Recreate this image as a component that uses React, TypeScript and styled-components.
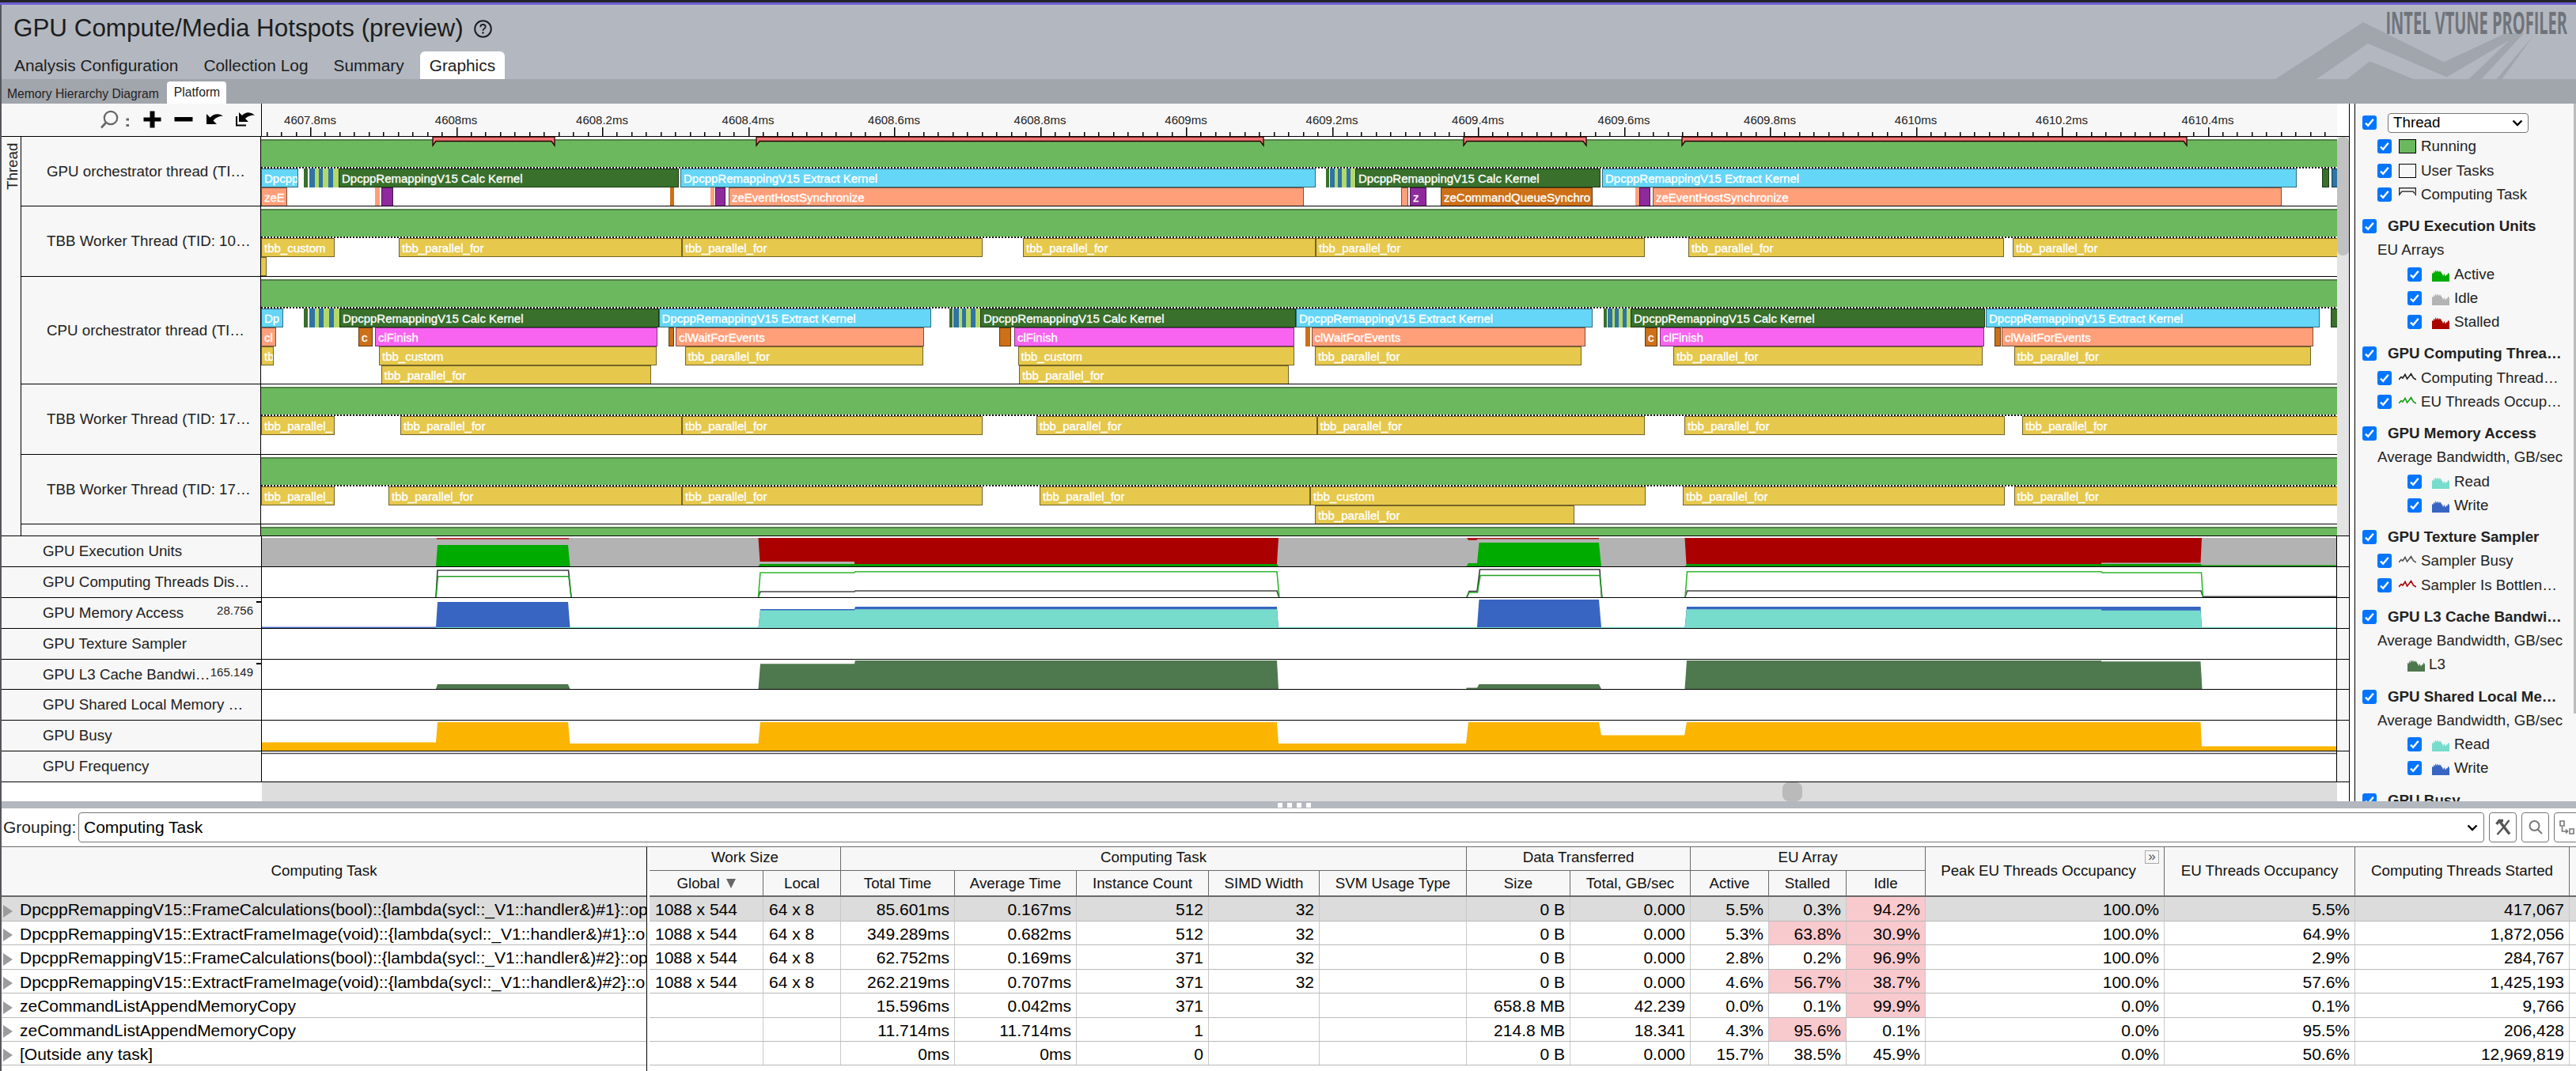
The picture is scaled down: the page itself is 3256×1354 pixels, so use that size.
import React from "react";
import styled, { createGlobalStyle } from "styled-components";

const Global = createGlobalStyle`
  * { box-sizing: border-box; }
  body { margin: 0; background: #fff; overflow: hidden; }
`;

/* ---------- page frame ---------- */

const Page = styled.div`
  width: 3256px;
  height: 1354px;
  display: flex;
  flex-direction: column;
  overflow: hidden;
  background: #fff;
  color: #222;
  font-family: "Liberation Sans", Arial, sans-serif;
  font-size: 18.75px;
  white-space: nowrap;
`;

const TopStrip = styled.div`
  height: 6px;
  flex: none;
  background: #222229;
  border-bottom: 3px solid #6c5fd3;
`;

const Body = styled.div`
  flex: 1;
  min-height: 0;
  display: flex;
  flex-direction: column;
  border-left: 2px solid #55575c;
`;

const Header = styled.header`
  height: 94px;
  flex: none;
  display: flex;
  justify-content: space-between;
  background: #b3b8c0;
`;

const HeaderMain = styled.div`
  display: flex;
  flex-direction: column;
  justify-content: space-between;
`;

const Title = styled.h1`
  margin: 12px 0 0 15px;
  display: flex;
  align-items: center;
  gap: 13px;
  font-size: 31.4px;
  line-height: 36px;
  font-weight: 400;
  color: #1c1d20;
`;

const Tabs = styled.nav`
  display: flex;
  align-items: flex-end;
  padding-left: 4px;
`;

const Tab = styled.a<{ $active?: boolean }>`
  height: 35px;
  padding: 0 12px;
  margin-right: 8px;
  font-size: 20.85px;
  line-height: 36px;
  color: #1c1d20;
  border-radius: 6px 6px 0 0;
  background: ${(p) => (p.$active ? "#fff" : "transparent")};
`;

const Brand = styled.div`
  position: relative;
  width: 400px;
  height: 94px;
`;

const BrandArt = styled.svg`
  display: block;
`;

const BrandName = styled.span`
  position: absolute;
  right: 11px;
  top: 1px;
  font-family: "Open Sans", "Liberation Sans", sans-serif;
  font-weight: 700;
  font-size: 40px;
  line-height: 42px;
  color: #70747a;
  transform: scaleX(0.5);
  transform-origin: right center;
`;

const SubTabs = styled.nav`
  height: 31px;
  flex: none;
  display: flex;
  align-items: flex-end;
  background: #a1a5ac;
`;

const SubTab = styled.a<{ $active?: boolean }>`
  height: 28px;
  padding: ${(p) => (p.$active ? "0 8px 0 9px" : "2px 10px 0 7px")};
  font-size: 15.7px;
  line-height: 28px;
  border-radius: 4px 4px 0 0;
  background: ${(p) => (p.$active ? "#fff" : "transparent")};
`;

/* ---------- timeline ---------- */

const Workspace = styled.div`
  height: 882px;
  flex: none;
  display: flex;
`;

const Timeline = styled.div`
  width: 2967px;
  flex: none;
  display: flex;
  flex-direction: column;
`;

const RulerRow = styled.div`
  height: 42px;
  flex: none;
  display: flex;
  border-bottom: 1px solid #000;
`;

const Toolbar = styled.div`
  width: 329px;
  border-right: 1px solid #000;
  background: #f7f7f7;
`;

const Ruler = styled.svg`
  display: block;
  flex: none;
  background: #f7f7f7;
`;

const ThreadArea = styled.div`
  height: 505px;
  flex: none;
  display: flex;
  position: relative;
  border-bottom: 1px solid #000;
`;

const GroupColumn = styled.div`
  width: 25px;
  display: flex;
  justify-content: center;
  border-right: 1px solid #000;
  background: #f7f7f7;
`;

const GroupName = styled.span`
  writing-mode: vertical-rl;
  transform: rotate(180deg);
  height: 66px;
  margin: 8px 0 0 3px;
  line-height: 24px;
  text-align: right;
`;

const ThreadRows = styled.div`
  width: 2927px;
  overflow: hidden;
`;

const ThreadRow = styled.div<{ $h: number }>`
  height: ${(p) => p.$h}px;
  display: flex;
  border-bottom: 1px solid #000;
  &:last-child { border-bottom: 0; }
`;

const ThreadLabel = styled.div`
  width: 303px;
  flex: none;
  display: flex;
  align-items: center;
  padding-left: 32px;
  border-right: 1px solid #000;
  background: #f7f7f7;
`;

const Track = styled.div`
  flex: 1;
  padding-top: 3px;
  overflow: hidden;
`;

const Running = styled.div`
  height: 36px;
  border-top: 2px solid #54814a;
  border-bottom: 1px solid #468a3a;
  background: #6cb85e;
`;

const Dots = styled.div`
  height: 2px;
  margin-top: -1px;
  background: repeating-linear-gradient(90deg, #111 0 2px, #f4fff0 2px 4px);
`;

const Lane = styled.div`
  position: relative;
  height: 24px;
`;

const palette: Record<string, string> = {
  cyan: "#65d6f7",
  dark: "#38702c",
  blue: "#2f74a3",
  lime: "#b3d86a",
  mint: "#8fcf86",
  salmon: "#ff9f7a",
  purple: "#8e2a9c",
  orange: "#cd7018",
  pink: "#f864f0",
  gold: "#e6c84c",
};

const Bar = styled.div<{ $c: string; $thin?: boolean }>`
  position: absolute;
  top: 0;
  height: 24px;
  overflow: hidden;
  padding-left: ${(p) => (p.$thin ? 0 : 3)}px;
  border: ${(p) => (p.$thin ? "0" : "1px solid rgba(0, 0, 0, 0.5)")};
  background: ${(p) => palette[p.$c]};
  color: #fff;
  font-size: 15px;
  line-height: 24px;
  -webkit-text-stroke: 0.35px #fff;
`;

const Scroll = styled.div`
  width: 15px;
  flex: none;
  background: #e3e3e3;
`;

const ScrollThumb = styled.div`
  height: 150px;
  border-radius: 7px;
  background: #c1c1c1;
`;

const Brackets = styled.svg`
  position: absolute;
  left: 328px;
  top: -1px;
  pointer-events: none;
`;

const MetricRow = styled.div<{ $h: number }>`
  height: ${(p) => p.$h}px;
  flex: none;
  display: flex;
  border-bottom: 1px solid #000;
  background: #f7f7f7;
`;

const MetricLabel = styled.div`
  position: relative;
  width: 329px;
  flex: none;
  display: flex;
  align-items: center;
  padding-left: 52px;
  border-right: 1px solid #000;
`;

const MetricMax = styled.span<{ $notch: number }>`
  position: absolute;
  right: 10px;
  top: 7px;
  font-size: 15px;
  line-height: 18px;
  &::after {
    content: "";
    position: absolute;
    right: -10px;
    top: ${(p) => p.$notch}px;
    width: 6px;
    height: 2px;
    background: #000;
  }
`;

const Chart = styled.svg`
  display: block;
  flex: none;
  background: #fff;
`;

const MetricEnd = styled.div`
  width: 16px;
  border-left: 1px solid #000;
`;

const HScroll = styled.div`
  width: 2623px;
  height: 24px;
  margin-left: 329px;
  padding-left: 1922px;
  background: #ddd;
`;

const HThumb = styled.div`
  width: 25px;
  height: 24px;
  border-radius: 8px;
  background: #bababa;
`;

const VSplit = styled.div`
  width: 8px;
  flex: none;
  border: solid #000;
  border-width: 0 1px;
  background: #fff;
`;

/* ---------- legend ---------- */

const Legend = styled.aside`
  flex: 1;
  display: flex;
  overflow: hidden;
  background: #f7f7f7;
`;

const LegendList = styled.div`
  width: 276px;
  flex: none;
  padding: 9px 0 0 9px;
`;

const LegendGroup = styled.div`
  margin-bottom: 10px;
`;

const LegendRow = styled.div<{ $indent: number; $bold?: boolean }>`
  height: 30.25px;
  padding-left: ${(p) => p.$indent}px;
  display: flex;
  align-items: center;
  font-weight: ${(p) => (p.$bold ? 700 : 400)};
`;

const LegendText = styled.span<{ $gap: number }>`
  margin-left: ${(p) => p.$gap}px;
`;

const Check = styled.span`
  width: 18px;
  height: 18px;
  flex: none;
  display: flex;
  align-items: center;
  justify-content: center;
  border-radius: 3px;
  background: #0075ff;
`;

const Swatch = styled.span<{ $c?: string }>`
  width: 22px;
  height: 18px;
  margin-left: 9px;
  border: 1px solid #000;
  background: ${(p) => p.$c || "transparent"};
`;

const Select = styled.div`
  width: 178px;
  height: 25px;
  margin-left: 14px;
  padding: 0 6px;
  display: flex;
  align-items: center;
  justify-content: space-between;
  border: 1px solid #767676;
  border-radius: 4px;
  background: #fff;
  color: #000;
`;

const Icon = styled.svg<{ $ml?: number }>`
  display: block;
  flex: none;
  margin-left: ${(p) => p.$ml || 0}px;
`;

const LegendScroll = styled.div`
  width: 3px;
  height: 771px;
  background: #bcbcbc;
`;

/* ---------- bottom pane ---------- */

const HSplit = styled.div`
  height: 9px;
  flex: none;
  display: flex;
  align-items: center;
  gap: 6px;
  padding-left: 1613px;
  background: #b3b8bf;
`;

const Grip = styled.i`
  width: 6px;
  height: 6px;
  background: #fff;
`;

const GroupingBar = styled.div`
  height: 48px;
  flex: none;
  display: flex;
  align-items: center;
  overflow: hidden;
  font-size: 21px;
`;

const GroupingLabel = styled.span`
  width: 97px;
  flex: none;
  padding-left: 2px;
`;

const Combo = styled.div`
  width: 3041px;
  flex: none;
  height: 38px;
  padding: 0 7px 0 6px;
  display: flex;
  align-items: center;
  justify-content: space-between;
  border: 1px solid #767676;
  border-radius: 4px;
  color: #000;
`;

const ToolButton = styled.button`
  width: 35px;
  height: 38px;
  flex: none;
  margin-left: 6px;
  padding: 0;
  display: flex;
  align-items: center;
  justify-content: center;
  border: 1px solid #767676;
  border-radius: 4px;
  background: #fff;
`;

const Table = styled.div`
  flex: 1;
  display: flex;
  gap: 3px;
  border-top: 1px solid #6a6a6a;
`;

const NamePane = styled.div`
  width: 816px;
  flex: none;
  overflow: hidden;
  border-right: 1px solid #000;
`;

const DataPane = styled.div`
  flex: 1;
  overflow: hidden;
`;

const NameHead = styled.div`
  height: 63px;
  padding-bottom: 2px;
  display: flex;
  align-items: center;
  justify-content: center;
  border-bottom: 2px solid #6a6a6a;
  background: #f7f7f7;
  color: #111;
`;

const columns = [144, 98, 144, 154, 167, 140, 186, 131, 152, 99, 98, 100, 302, 241, 271];
const template = columns.map((w) => w + "px").join(" ") + " 1fr";

const DataHead = styled.div`
  height: 63px;
  display: grid;
  grid-template-columns: ${template};
  grid-template-rows: 30px 31px;
  border-bottom: 2px solid #6a6a6a;
  background: #f7f7f7;
  color: #111;
`;

const HeadCell = styled.div<{ $area: string; $line?: boolean; $tall?: boolean; $shift?: boolean }>`
  grid-area: ${(p) => p.$area};
  position: relative;
  display: flex;
  align-items: center;
  justify-content: center;
  gap: 8px;
  padding: ${(p) => `0 ${p.$shift ? 16 : 0}px ${p.$line ? 4 : p.$tall ? 2 : 0}px 0`};
  border-right: 1px solid #6a6a6a;
  border-bottom: ${(p) => (p.$line ? "1px solid #6a6a6a" : "0")};
`;

const Expand = styled.span`
  position: absolute;
  right: 6px;
  top: 4px;
  width: 18px;
  height: 17px;
  border: 1px solid #aaa;
  font-size: 17px;
  line-height: 13px;
  text-align: center;
  color: #555;
`;

const Triangle = styled.i`
  border: 6px solid transparent;
  border-top: 12px solid #666;
  border-bottom: 0;
`;

const NameRow = styled.div<{ $h: number; $sel: boolean }>`
  height: ${(p) => p.$h}px;
  display: flex;
  align-items: center;
  padding-top: 2px;
  border-bottom: 1px solid #b9b9b9;
  background: ${(p) => (p.$sel ? "#dcdcdc" : "#fff")};
  color: #000;
  font-size: 21px;
`;

const Arrow = styled.i`
  margin: 3px 9px 0 2px;
  border: 8px solid transparent;
  border-left: 12px solid #9c9c9c;
  border-right: 0;
`;

const DataRow = styled.div<{ $h: number; $sel: boolean }>`
  height: ${(p) => p.$h}px;
  display: grid;
  grid-template-columns: ${template};
  border-bottom: 1px solid #b9b9b9;
  background: ${(p) => (p.$sel ? "#dcdcdc" : "#fff")};
  color: #000;
  font-size: 21px;
`;

const Cell = styled.div<{ $left?: boolean; $hot?: boolean }>`
  display: flex;
  align-items: center;
  justify-content: ${(p) => (p.$left ? "flex-start" : "flex-end")};
  padding: 2px 6px 0 7px;
  border-right: 1px solid #c9c9c9;
  background: ${(p) => (p.$hot ? "#f8c9cd" : "transparent")};
`;

/* ---------- data ---------- */

type Task = [number, number, string, string?];
const P = "tbb_parallel_for";
const CALC = "DpcppRemappingV15 Calc Kernel";
const EXTRACT = "DpcppRemappingV15 Extract Kernel";

const stripes = (a: number, b: number): Task[] => {
  const w = (b - a) / 44;
  const s: [number, number, string][] = [
    [0, 5, "dark"], [6.5, 14, "blue"], [14, 18.5, "lime"], [18.5, 24, "blue"],
    [24, 31, "lime"], [31, 37, "blue"], [37, 44, "lime"],
  ];
  return s.map(([x, y, c]) => [a + x * w, a + y * w, c]);
};

const threads: { name: string; h: number; lanes: Task[][] }[] = [
  {
    name: "GPU orchestrator thread (TI…",
    h: 88,
    lanes: [
      [
        [330, 376.5, "cyan", "Dpcpp"], ...stripes(384, 428), [428, 858, "dark", CALC],
        [860, 1663, "cyan", EXTRACT], ...stripes(1675.5, 1713), [1713, 2023, "dark", CALC],
        [2025, 2903, "cyan", EXTRACT], [2935, 2944, "dark", ""], [2947, 2960, "blue", ""],
      ],
      [
        [330, 363, "salmon", "zeE"], [474, 480, "salmon"], [481.5, 496.5, "purple", ""], [847, 852, "orange"],
        [898, 903, "salmon"], [904, 917, "purple", ""], [921, 1648, "salmon", "zeEventHostSynchronize"],
        [1771, 1780, "salmon", ""], [1782, 1803, "purple", "z"], [1821, 2013, "orange", "zeCommandQueueSynchro"],
        [2067, 2072, "salmon"], [2072, 2086, "purple", ""], [2089, 2884, "salmon", "zeEventHostSynchronize"],
      ],
    ],
  },
  {
    name: "TBB Worker Thread (TID: 10…",
    h: 89,
    lanes: [
      [
        [330, 423, "gold", "tbb_custom"], [504, 862, "gold", P], [862, 1241.5, "gold", P], [1293, 1663, "gold", P],
        [1663, 2078.5, "gold", P], [2134, 2533, "gold", P], [2544, 2960, "gold", P],
      ],
      [[326, 337, "gold", ""]],
    ],
  },
  {
    name: "CPU orchestrator thread (TI…",
    h: 136,
    lanes: [
      [
        [330, 358, "cyan", "Dp"], ...stripes(384, 429), [429, 832.5, "dark", CALC], [832.5, 1177, "cyan", EXTRACT],
        ...stripes(1199.5, 1239), [1239, 1638, "dark", CALC], [1638, 2013, "cyan", EXTRACT],
        ...stripes(2027, 2061), [2061, 2509, "dark", CALC], [2510, 2932, "cyan", EXTRACT], [2945.5, 2960, "dark", ""],
      ],
      [
        [330, 349, "salmon", "cl"], [453, 471, "orange", "c"], [474, 831, "pink", "clFinish"], [844.5, 852, "orange", ""],
        [854, 1168, "salmon", "clWaitForEvents"], [1263, 1278, "orange", ""], [1282, 1636, "pink", "clFinish"],
        [1650, 1655.5, "orange"], [1657.5, 2003.5, "salmon", "clWaitForEvents"], [2079, 2095, "orange", "c"],
        [2098, 2508, "pink", "clFinish"], [2521, 2529, "orange", ""], [2530, 2924, "salmon", "clWaitForEvents"],
      ],
      [
        [330, 346, "gold", "tb"], [479, 829.5, "gold", "tbb_custom"], [865.5, 1167, "gold", P],
        [1286.5, 1636, "gold", "tbb_custom"], [1662, 1999, "gold", P], [2115, 2506, "gold", P], [2545.5, 2921, "gold", P],
      ],
      [[481.5, 823, "gold", P], [1288, 1629, "gold", P]],
    ],
  },
  {
    name: "TBB Worker Thread (TID: 17…",
    h: 89,
    lanes: [
      [
        [330, 423, "gold", "tbb_parallel_"], [506, 862, "gold", P], [862, 1241.5, "gold", P], [1310, 1664.5, "gold", P],
        [1664.5, 2078.5, "gold", P], [2129, 2534, "gold", P], [2556, 2960, "gold", P],
      ],
    ],
  },
  {
    name: "TBB Worker Thread (TID: 17…",
    h: 88,
    lanes: [
      [
        [330, 423, "gold", "tbb_parallel_"], [491, 862, "gold", P], [862, 1241.5, "gold", P], [1314, 1656, "gold", P],
        [1656, 2080, "gold", "tbb_custom"], [2127, 2534, "gold", P], [2545.5, 2960, "gold", P],
      ],
      [[1662, 1990, "gold", P]],
    ],
  },
  { name: "", h: 15, lanes: [] },
];

const brackets = [[547, 701], [956, 1597], [1850, 2005], [2126, 2764]];

type Shape = { d: string; fill?: string; stroke?: string };
const metrics: { name: string; y: number; h: number; max?: string; notch?: number; shapes: Shape[] }[] = [
  {
    name: "GPU Execution Units",
    y: 678,
    h: 39,
    shapes: [
      { d: "M331 680H2954V716H331Z", fill: "#b3b3b3" },
      { d: "M552 680H719V682H552Z", fill: "#b83c3c" },
      { d: "M551 716L553 689H718L720.5 716Z", fill: "#00ab00" },
      { d: "M958.5 680H1616L1614 713H1080V710H960.5Z", fill: "#ab0000" },
      { d: "M958.5 716L960.5 713H1614L1616 716Z", fill: "#0a9a00" },
      { d: "M1854 680H2021V681.5H1868L1866 683H1856Z", fill: "#b01818" },
      { d: "M1853.5 716L1856 712H1867L1869.5 686H2021L2024 716Z", fill: "#00ab00" },
      { d: "M2129.5 680H2783L2781.5 711.5H2656V713H2131.5Z", fill: "#ab0000" },
      { d: "M2130 716L2132 713H2782L2783 714.5H2954V716Z", fill: "#0a9a00" },
    ],
  },
  {
    name: "GPU Computing Threads Dis…",
    y: 717,
    h: 39,
    shapes: [
      { d: "M551 755L553 721H718.5L722 755", stroke: "#3c3842" },
      { d: "M551 755L553.5 728.7H719L722 755", stroke: "#22a022" },
      { d: "M958.5 755L961 748H1080L1081 747H1614L1616.5 755", stroke: "#444" },
      { d: "M958.5 755L961 724H1080L1081 722.7H1614L1617 755", stroke: "#2fb82f" },
      { d: "M1854 755L1857 747.5H1867L1870.5 720H2022L2024.5 755", stroke: "#3c3842" },
      { d: "M1854 755L1857 749H1867.5L1871 727.5H2022L2025 755", stroke: "#22a022" },
      { d: "M2130 755L2132.5 747H2782L2784.5 754.3H2954", stroke: "#444" },
      { d: "M2130 755L2132.5 722.7H2656L2657 724H2782.5L2784.5 754", stroke: "#2fb82f" },
    ],
  },
  {
    name: "GPU Memory Access",
    y: 756,
    h: 39,
    max: "28.756",
    notch: -3,
    shapes: [
      { d: "M331 792.6H551V794H331Z", fill: "#4a70c4" },
      { d: "M551 792.8H2954V794H551Z", fill: "#77dccb" },
      { d: "M551 793L553 761H718L720.5 793Z", fill: "#3865c2" },
      { d: "M958.5 794L961 770H1080L1081 767H1614L1616 794Z", fill: "#3865c2" },
      { d: "M958.5 794L961 771.5H1080L1081 770.3H1614L1616 794Z", fill: "#77dccb" },
      { d: "M1867 793L1869.5 758H2021L2024 793Z", fill: "#3865c2" },
      { d: "M2129.5 794L2132 767H2781.5L2783 794Z", fill: "#3865c2" },
      { d: "M2129.5 794L2132 770.3H2656V771.7H2781.5L2783 794Z", fill: "#77dccb" },
    ],
  },
  { name: "GPU Texture Sampler", y: 795, h: 39, shapes: [] },
  {
    name: "GPU L3 Cache Bandwi…",
    y: 834,
    h: 38,
    max: "165.149",
    notch: -3,
    shapes: [
      { d: "M551 871L553 865H718L720.5 871Z", fill: "#4e784e" },
      { d: "M958.5 871L961 839.3H1080L1081 835H1614L1616 871Z", fill: "#4e784e" },
      { d: "M1853.5 871V869.5H1867L1869.5 865H2021L2024 871Z", fill: "#4e784e" },
      { d: "M2129.5 871L2132 835H2656V836.3H2781.5L2783.5 871Z", fill: "#4e784e" },
    ],
  },
  { name: "GPU Shared Local Memory …", y: 872, h: 39, shapes: [] },
  {
    name: "GPU Busy",
    y: 911,
    h: 39,
    shapes: [
      {
        d: "M331 949V938.5H551L553 913H718L720.5 940H958.5L961 913H1614L1616 940H1853L1856 913H2021L2024 929.5H2129L2132 913H2781.5L2783 943.5H2954V949Z",
        fill: "#fbb400",
      },
    ],
  },
  { name: "GPU Frequency", y: 950, h: 39, shapes: [{ d: "M331 952.5H2954", stroke: "#4a4a52" }] },
];

type Item = { kind: string; text: string; color?: string };
const legend: Item[][] = [
  [
    { kind: "select", text: "Thread" },
    { kind: "swatch", text: "Running", color: "#6cb85e" },
    { kind: "swatch", text: "User Tasks" },
    { kind: "bracket", text: "Computing Task" },
  ],
  [
    { kind: "head", text: "GPU Execution Units" },
    { kind: "label", text: "EU Arrays" },
    { kind: "area", text: "Active", color: "#00ab00" },
    { kind: "area", text: "Idle", color: "#b3b3b3" },
    { kind: "area", text: "Stalled", color: "#ab0000" },
  ],
  [
    { kind: "head", text: "GPU Computing Threa…" },
    { kind: "line", text: "Computing Thread…", color: "#222" },
    { kind: "line", text: "EU Threads Occup…", color: "#14a014" },
  ],
  [
    { kind: "head", text: "GPU Memory Access" },
    { kind: "label", text: "Average Bandwidth, GB/sec" },
    { kind: "area", text: "Read", color: "#77dccb" },
    { kind: "area", text: "Write", color: "#3865c2" },
  ],
  [
    { kind: "head", text: "GPU Texture Sampler" },
    { kind: "line", text: "Sampler Busy", color: "#555" },
    { kind: "line", text: "Sampler Is Bottlen…", color: "#ab0000" },
  ],
  [
    { kind: "head", text: "GPU L3 Cache Bandwi…" },
    { kind: "label", text: "Average Bandwidth, GB/sec" },
    { kind: "plain", text: "L3", color: "#4e784e" },
  ],
  [
    { kind: "head", text: "GPU Shared Local Me…" },
    { kind: "label", text: "Average Bandwidth, GB/sec" },
    { kind: "area", text: "Read", color: "#77dccb" },
    { kind: "area", text: "Write", color: "#3865c2" },
  ],
  [{ kind: "head", text: "GPU Busy" }],
];

const rows: { h: number; name: string; cells: string[]; hot: number[] }[] = [
  { h: 31, name: "DpcppRemappingV15::FrameCalculations(bool)::{lambda(sycl::_V1::handler&)#1}::op", hot: [11],
    cells: ["1088 x 544", "64 x 8", "85.601ms", "0.167ms", "512", "32", "", "0 B", "0.000", "5.5%", "0.3%", "94.2%", "100.0%", "5.5%", "417,067"] },
  { h: 30, name: "DpcppRemappingV15::ExtractFrameImage(void)::{lambda(sycl::_V1::handler&)#1}::o", hot: [10, 11],
    cells: ["1088 x 544", "64 x 8", "349.289ms", "0.682ms", "512", "32", "", "0 B", "0.000", "5.3%", "63.8%", "30.9%", "100.0%", "64.9%", "1,872,056"] },
  { h: 31, name: "DpcppRemappingV15::FrameCalculations(bool)::{lambda(sycl::_V1::handler&)#2}::op", hot: [11],
    cells: ["1088 x 544", "64 x 8", "62.752ms", "0.169ms", "371", "32", "", "0 B", "0.000", "2.8%", "0.2%", "96.9%", "100.0%", "2.9%", "284,767"] },
  { h: 30, name: "DpcppRemappingV15::ExtractFrameImage(void)::{lambda(sycl::_V1::handler&)#2}::o", hot: [10, 11],
    cells: ["1088 x 544", "64 x 8", "262.219ms", "0.707ms", "371", "32", "", "0 B", "0.000", "4.6%", "56.7%", "38.7%", "100.0%", "57.6%", "1,425,193"] },
  { h: 31, name: "zeCommandListAppendMemoryCopy", hot: [11],
    cells: ["", "", "15.596ms", "0.042ms", "371", "", "", "658.8 MB", "42.239", "0.0%", "0.1%", "99.9%", "0.0%", "0.1%", "9,766"] },
  { h: 30, name: "zeCommandListAppendMemoryCopy", hot: [10],
    cells: ["", "", "11.714ms", "11.714ms", "1", "", "", "214.8 MB", "18.341", "4.3%", "95.6%", "0.1%", "0.0%", "95.5%", "206,428"] },
  { h: 30, name: "[Outside any task]", hot: [],
    cells: ["", "", "0ms", "0ms", "0", "", "", "0 B", "0.000", "15.7%", "38.5%", "45.9%", "0.0%", "50.6%", "12,969,819"] },
];

/* ---------- parts ---------- */

const CheckBox = () => (
  <Check>
    <svg width="14" height="14" viewBox="0 0 14 14">
      <path d="M2 7.6L5.2 10.8L11.8 2.8" fill="none" stroke="#fff" strokeWidth="2.4" />
    </svg>
  </Check>
);

const Chevron = () => (
  <svg width="14" height="9" viewBox="0 0 14 9">
    <path d="M1.5 1.5L7 7L12.5 1.5" fill="none" stroke="#000" strokeWidth="2.4" />
  </svg>
);

const AreaIcon = ({ color, ml }: { color?: string; ml: number }) => (
  <Icon $ml={ml} width="22" height="18" viewBox="0 0 22 18">
    <path
      d="M0 18V7L1.5 8L2.3 4.500L3.500 7L4.500 3L5.500 6L7 3.500L8 6.500L9 4L10 6L11 4.500L12 7.500L13 8L14 11L15.500 8L17 11.500L18.500 9L19.500 9.500L20.500 6.500L22 9V18Z"
      fill={color}
    />
  </Icon>
);

const LineIcon = ({ color }: { color?: string }) => (
  <Icon $ml={9} width="22" height="18" viewBox="0 0 22 18">
    <path d="M0 11L3 7.5L5 9L8 4.5L10.5 10L13 7L15.5 3.5L18.5 9L22 11" fill="none" stroke={color} strokeWidth="1.6" />
  </Icon>
);

const LegendItem = ({ item }: { item: Item }) => {
  switch (item.kind) {
    case "select":
      return (
        <LegendRow $indent={0}>
          <CheckBox />
          <Select>
            {item.text}
            <Chevron />
          </Select>
        </LegendRow>
      );
    case "head":
      return (
        <LegendRow $indent={0} $bold>
          <CheckBox />
          <LegendText $gap={14}>{item.text}</LegendText>
        </LegendRow>
      );
    case "label":
      return (
        <LegendRow $indent={19}>
          <LegendText $gap={0}>{item.text}</LegendText>
        </LegendRow>
      );
    case "area":
      return (
        <LegendRow $indent={57}>
          <CheckBox />
          <AreaIcon color={item.color} ml={13} />
          <LegendText $gap={6}>{item.text}</LegendText>
        </LegendRow>
      );
    case "plain":
      return (
        <LegendRow $indent={57}>
          <AreaIcon color={item.color} ml={0} />
          <LegendText $gap={5}>{item.text}</LegendText>
        </LegendRow>
      );
    case "line":
      return (
        <LegendRow $indent={19}>
          <CheckBox />
          <LineIcon color={item.color} />
          <LegendText $gap={6}>{item.text}</LegendText>
        </LegendRow>
      );
    case "bracket":
      return (
        <LegendRow $indent={19}>
          <CheckBox />
          <Icon $ml={9} width="22" height="18" viewBox="0 0 22 18">
            <path d="M0.7 9V0.8H21.300V9L18 5H4Z" fill="#fff" stroke="#333" strokeWidth="1.4" />
          </Icon>
          <LegendText $gap={6}>{item.text}</LegendText>
        </LegendRow>
      );
    default:
      return (
        <LegendRow $indent={19}>
          <CheckBox />
          <Swatch $c={item.color} />
          <LegendText $gap={6}>{item.text}</LegendText>
        </LegendRow>
      );
  }
};

const tickLabels = ["4607.8ms", "4608ms", "4608.2ms", "4608.4ms", "4608.6ms", "4608.8ms", "4609ms", "4609.2ms", "4609.4ms", "4609.6ms", "4609.8ms", "4610ms", "4610.2ms", "4610.4ms"];

const TimeRuler = () => (
  <Ruler width="2623" height="41" viewBox="331 131 2623 41">
    {Array.from({ length: 142 }, (_, i) => i - 3).map((i) => {
      const x = Math.round(392 + i * 18.45);
      const major = i % 10 === 0;
      return <rect key={i} x={x} y={major ? 161 : 167} width={1.5} height={major ? 11 : 5} fill="#000" />;
    })}
    {tickLabels.map((t, i) => (
      <text key={t} x={392 + i * 184.5} y={157} fontSize="15" textAnchor="middle" fill="#222">
        {t}
      </text>
    ))}
  </Ruler>
);

const TimelineTools = () => (
  <Toolbar>
    <svg width="328" height="41" viewBox="2 131 328 41">
      <circle cx="140" cy="149" r="8.2" fill="none" stroke="#666" strokeWidth="2.2" />
      <path d="M134 155L128 161.5" stroke="#666" strokeWidth="2.6" />
      <path d="M159.5 149.5h3.5v3h-3.5zM159.5 157h3.5v3h-3.5z" fill="#666" />
      <path d="M189.500 140.500h6v8h8v5h-8v8h-6v-8h-8v-5h8z" fill="#000" />
      <path d="M220.500 148h23v5.500h-23z" fill="#000" />
      <path d="M261 144V157H274L269.500 152.500Q274 147 282 146.500Q273 141 265.500 148.500Z" fill="#000" />
      <path d="M302 142V154H314L310 150Q314 145.500 322 145.500Q313 139 306 146Z" fill="#000" />
      <path d="M299 147V158.500H311" fill="none" stroke="#000" strokeWidth="2" />
    </svg>
  </Toolbar>
);

const BrandMark = () => (
  <Brand>
    <BrandArt width="400" height="94" viewBox="2856 6 400 94">
      <g fill="#a1a5ac">
        <path d="M2876 100L2987 28L3089 78.500L3167 42H3187L3092.500 97.500L2993 55L2928 100Z" />
        <path d="M2966.500 100L2995.500 77.500L3050.500 100Z" />
        <path d="M3120.500 100L3181 42H3190L3136.500 100Z" />
        <path d="M3155.500 100L3203 44L3162.500 100Z" />
      </g>
    </BrandArt>
    <BrandName>INTEL VTUNE PROFILER</BrandName>
  </Brand>
);

export default function App() {
  return (
    <Page>
      <Global />
      <TopStrip />
      <Body>
        <Header>
          <HeaderMain>
            <Title>
              GPU Compute/Media Hotspots (preview)
              <svg width="23" height="23" viewBox="0 0 23 23">
                <circle cx="11.500" cy="11.500" r="10.300" fill="none" stroke="#1c1d20" strokeWidth="2" />
                <path d="M8.300 9.200Q8.300 6 11.500 6T14.700 8.800Q14.700 10.300 13 11.300T11.500 13.800" fill="none" stroke="#1c1d20" strokeWidth="1.800" />
                <circle cx="11.500" cy="16.500" r="1.200" fill="#1c1d20" />
              </svg>
            </Title>
            <Tabs>
              <Tab>Analysis Configuration</Tab>
              <Tab>Collection Log</Tab>
              <Tab>Summary</Tab>
              <Tab $active>Graphics</Tab>
            </Tabs>
          </HeaderMain>
          <BrandMark />
        </Header>
        <SubTabs>
          <SubTab>Memory Hierarchy Diagram</SubTab>
          <SubTab $active>Platform</SubTab>
        </SubTabs>

        <Workspace>
          <Timeline>
            <RulerRow>
              <TimelineTools />
              <TimeRuler />
            </RulerRow>
            <ThreadArea>
              <GroupColumn>
                <GroupName>Thread</GroupName>
              </GroupColumn>
              <ThreadRows>
                {threads.map((t, i) => (
                  <ThreadRow key={i} $h={t.h}>
                    <ThreadLabel>{t.name}</ThreadLabel>
                    <Track>
                      <Running />
                      <Dots />
                      {t.lanes.map((lane, j) => (
                        <Lane key={j}>
                          {lane.map(([a, b, c, text], k) => (
                            <Bar key={k} $c={c} $thin={text === undefined} style={{ left: a - 330, width: b - a }}>
                              {text}
                            </Bar>
                          ))}
                        </Lane>
                      ))}
                    </Track>
                  </ThreadRow>
                ))}
              </ThreadRows>
              <Scroll>
                <ScrollThumb />
              </Scroll>
              <Brackets width="2624" height="14" viewBox="330 172 2624 14">
                {brackets.map(([a, b]) => (
                  <path
                    key={a}
                    d={`M${a} 173H${b}V184L${b - 4} 178.500H${a + 4}L${a} 184Z`}
                    fill="#f07474"
                    stroke="#200"
                    strokeWidth="1.300"
                  />
                ))}
              </Brackets>
            </ThreadArea>
            {metrics.map((m) => (
              <MetricRow key={m.name} $h={m.h}>
                <MetricLabel>
                  {m.name}
                  {m.max && <MetricMax $notch={m.notch || 0}>{m.max}</MetricMax>}
                </MetricLabel>
                <Chart width="2622" height={m.h - 1} viewBox={`331 ${m.y} 2622 ${m.h - 1}`}>
                  {m.shapes.map((s, i) => (
                    <path key={i} d={s.d} fill={s.fill || "none"} stroke={s.stroke || "none"} strokeWidth="1.600" />
                  ))}
                </Chart>
                <MetricEnd />
              </MetricRow>
            ))}
            <HScroll>
              <HThumb />
            </HScroll>
          </Timeline>
          <VSplit />
          <Legend>
            <LegendList>
              {legend.map((g, i) => (
                <LegendGroup key={i}>
                  {g.map((item) => (
                    <LegendItem key={item.text} item={item} />
                  ))}
                </LegendGroup>
              ))}
            </LegendList>
            <LegendScroll />
          </Legend>
        </Workspace>

        <HSplit>
          <Grip />
          <Grip />
          <Grip />
          <Grip />
        </HSplit>
        <GroupingBar>
          <GroupingLabel>Grouping:</GroupingLabel>
          <Combo>
            Computing Task
            <Chevron />
          </Combo>
          <ToolButton>
            <svg width="22" height="22" viewBox="0 0 22 22" fill="none" stroke="#555">
              <path d="M2.500 7L6 2.500H11M7 4L19 19.500" strokeWidth="3.400" />
              <path d="M18.500 2L13.500 8.500L3.500 20" strokeWidth="2.400" />
            </svg>
          </ToolButton>
          <ToolButton>
            <svg width="20" height="20" viewBox="0 0 20 20" fill="none" stroke="#777" strokeWidth="2">
              <circle cx="8.500" cy="8" r="6" />
              <path d="M12.500 12.500L18 18" />
            </svg>
          </ToolButton>
          <ToolButton>
            <svg width="22" height="20" viewBox="0 0 22 20" fill="none" stroke="#777" strokeWidth="1.600">
              <path d="M1 2h5v6h-5zM13 12h5v6h-5zM3.500 9v6h7M8 12.500l2.500 2.500L8 17.500" />
            </svg>
          </ToolButton>
        </GroupingBar>

        <Table>
          <NamePane>
            <NameHead>Computing Task</NameHead>
            {rows.map((r, i) => (
              <NameRow key={i} $h={r.h} $sel={i === 0}>
                <Arrow />
                {r.name}
              </NameRow>
            ))}
          </NamePane>
          <DataPane>
            <DataHead>
              <HeadCell $area="1 / 1 / 2 / 3" $line>Work Size</HeadCell>
              <HeadCell $area="1 / 3 / 2 / 8" $line>Computing Task</HeadCell>
              <HeadCell $area="1 / 8 / 2 / 10" $line>Data Transferred</HeadCell>
              <HeadCell $area="1 / 10 / 2 / 13" $line>EU Array</HeadCell>
              <HeadCell $area="1 / 13 / 3 / 14" $tall $shift>
                Peak EU Threads Occupancy
                <Expand>»</Expand>
              </HeadCell>
              <HeadCell $area="1 / 14 / 3 / 15" $tall>EU Threads Occupancy</HeadCell>
              <HeadCell $area="1 / 15 / 3 / 16" $tall>Computing Threads Started</HeadCell>
              <HeadCell $area="2 / 1 / 3 / 2">
                Global
                <Triangle />
              </HeadCell>
              {["Local", "Total Time", "Average Time", "Instance Count", "SIMD Width", "SVM Usage Type", "Size", "Total, GB/sec", "Active", "Stalled", "Idle"].map((t, i) => (
                <HeadCell key={t} $area={`2 / ${i + 2} / 3 / ${i + 3}`}>{t}</HeadCell>
              ))}
            </DataHead>
            {rows.map((r, i) => (
              <DataRow key={i} $h={r.h} $sel={i === 0}>
                {r.cells.map((c, j) => (
                  <Cell key={j} $left={j < 2} $hot={r.hot.includes(j)}>
                    {c}
                  </Cell>
                ))}
              </DataRow>
            ))}
          </DataPane>
        </Table>
      </Body>
    </Page>
  );
}
